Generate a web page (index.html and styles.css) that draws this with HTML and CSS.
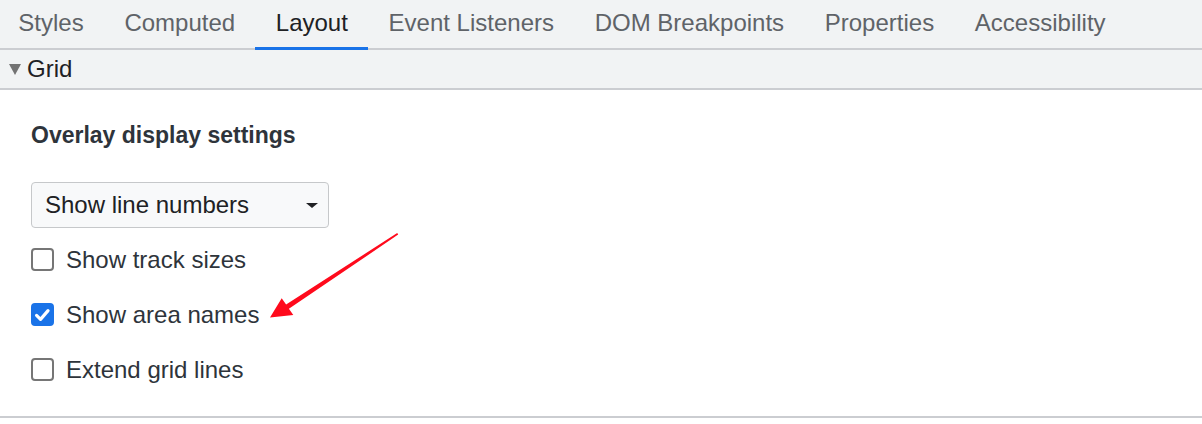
FILE: index.html
```html
<!DOCTYPE html>
<html>
<head>
<meta charset="utf-8">
<link rel="stylesheet" href="styles.css">
</head>
<body>
<div class="panel">
  <div class="tabs">
    <div class="tab">Styles</div>
    <div class="tab">Computed</div>
    <div class="tab active">Layout</div>
    <div class="tab">Event Listeners</div>
    <div class="tab">DOM Breakpoints</div>
    <div class="tab">Properties</div>
    <div class="tab">Accessibility</div>
  </div>
  <div class="section-header">
    <span class="triangle"></span>
    <span class="section-title">Grid</span>
  </div>
  <div class="content">
    <h2 class="heading">Overlay display settings</h2>
    <div class="select">
      <span class="select-text">Show line numbers</span>
      <span class="select-arrow"></span>
    </div>
    <div class="options">
      <label class="option"><span class="checkbox"></span><span class="label">Show track sizes</span></label>
      <label class="option"><span class="checkbox checked"><svg viewBox="0 0 24 24" width="24" height="24"><path d="M4.5 12.5 L9.5 17.5 L19 6.5" fill="none" stroke="#fff" stroke-width="4" stroke-linecap="round" stroke-linejoin="round"/></svg></span><span class="label">Show area names</span></label>
      <label class="option"><span class="checkbox"></span><span class="label">Extend grid lines</span></label>
    </div>
    <svg class="annotation" width="1202" height="424" viewBox="0 0 1202 424">
      <polygon fill="#ff0a1c" points="397.2,233.0 286.1,304.6 281.7,298.3 270,317.5 293.3,315 288.9,308.8 398.2,234.6"/>
    </svg>
  </div>
</div>
</body>
</html>
```
FILE: styles.css
```css
* { box-sizing: border-box; }
html, body {
  margin: 0;
  padding: 0;
  background: #ffffff;
  font-family: "Liberation Sans", Arial, sans-serif;
}
.panel {
  width: 1202px;
  height: 424px;
  position: relative;
  overflow: hidden;
}
.tabs {
  display: flex;
  height: 50px;
  background: #f1f3f4;
  border-bottom: 2px solid #cbcdd1;
  margin-left: -2px;
}
.tab {
  height: 48px;
  padding: 0 20.35px;
  font-size: 24px;
  line-height: 46px;
  color: #5f6368;
  white-space: nowrap;
  position: relative;
}
.tab.active {
  color: #202124;
}
.tab.active::after {
  content: "";
  position: absolute;
  left: 0;
  right: 0;
  bottom: -2px;
  height: 3px;
  background: #1a73e8;
}
.section-header {
  display: flex;
  align-items: center;
  height: 40px;
  background: #f1f3f4;
  border-bottom: 2px solid #cbcdd1;
  padding-left: 9px;
}
.triangle {
  width: 0;
  height: 0;
  border-left: 6px solid transparent;
  border-right: 6px solid transparent;
  border-top: 11px solid #737373;
  margin-right: 6px;
  margin-top: 1px;
}
.section-title {
  font-size: 24px;
  color: #202124;
  line-height: 38px;
}
.content {
  height: 328px;
  border-bottom: 2px solid #cbcdd1;
  padding: 31px 0 0 31px;
  color: #2e343b;
}
.heading {
  margin: 0;
  font-size: 23px;
  font-weight: bold;
  line-height: 28px;
  color: #2e343b;
}
.select {
  margin-top: 33px;
  width: 298px;
  height: 46px;
  border: 1px solid #c6c8ca;
  border-radius: 4px;
  background: #f8f9fa;
  display: flex;
  align-items: center;
  justify-content: space-between;
  padding: 0 10px 0 13px;
}
.select-text {
  font-size: 24px;
  color: #202124;
}
.select-arrow {
  width: 0;
  height: 0;
  border-left: 6px solid transparent;
  border-right: 6px solid transparent;
  border-top: 5px solid #202124;
}
.options {
  margin-top: 4px;
  display: flex;
  flex-direction: column;
}
.option {
  display: flex;
  align-items: center;
  height: 55px;
  gap: 12px;
}
.checkbox {
  width: 23px;
  height: 23px;
  border: 2px solid #767676;
  border-radius: 4px;
  background: #fff;
  display: flex;
  align-items: center;
  justify-content: center;
  flex: none;
}
.checkbox.checked {
  background: #1a73e8;
  border-color: #1a73e8;
}
.checkbox svg {
  width: 20px;
  height: 20px;
}
.label {
  font-size: 24px;
  color: #2e343b;
}
.annotation {
  position: absolute;
  left: 0;
  top: 0;
  pointer-events: none;
}
```
